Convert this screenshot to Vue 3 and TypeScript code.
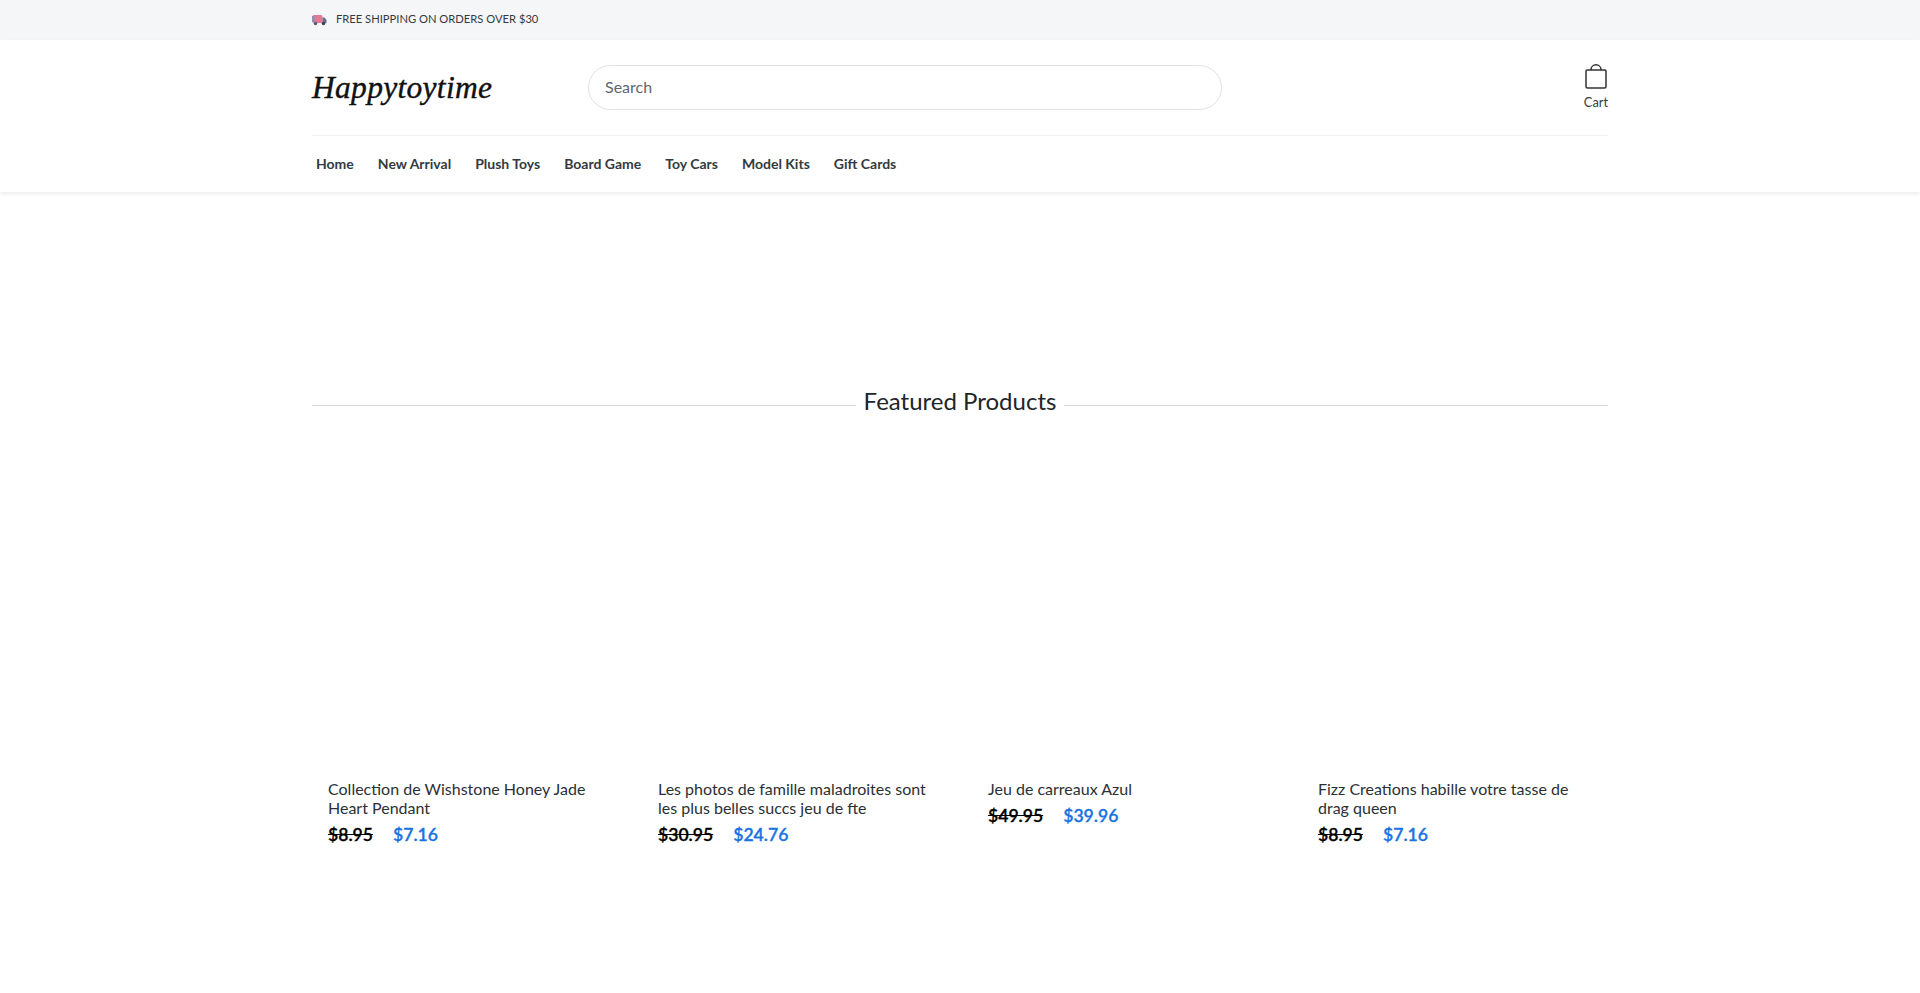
<script setup lang="ts">
interface Product {
  title: string;
  oldPrice: string;
  price: string;
}

const navLinks: string[] = ['Home', 'New Arrival', 'Plush Toys', 'Board Game', 'Toy Cars', 'Model Kits', 'Gift Cards'];

const products: Product[] = [
  { title: 'Collection de Wishstone Honey Jade Heart Pendant', oldPrice: '$8.95', price: '$7.16' },
  { title: 'Les photos de famille maladroites sont les plus belles succs jeu de fte', oldPrice: '$30.95', price: '$24.76' },
  { title: 'Jeu de carreaux Azul', oldPrice: '$49.95', price: '$39.96' },
  { title: 'Fizz Creations habille votre tasse de drag queen', oldPrice: '$8.95', price: '$7.16' },
];
</script>

<template>
  <div class="page">
    <div class="topbar">
      <div class="container topbar-inner">
        <svg class="truck" width="15" height="12" viewBox="0 0 15 12">
          <rect x="0.500" y="1" width="10" height="8" rx="1.500" fill="#e27a94" />
          <path d="M10.500 3.500h2l2 2.500v3h-4z" fill="#6a6f8c" />
          <rect x="0" y="2" width="2.500" height="6" fill="#8d8fb5" />
          <circle cx="3.500" cy="9.500" r="1.800" fill="#5a5f7a" />
          <circle cx="11.500" cy="9.500" r="1.800" fill="#3f4258" />
        </svg>
        <span>FREE SHIPPING ON ORDERS OVER $30</span>
      </div>
    </div>

    <header class="header">
      <div class="container">
        <div class="header-main">
          <a class="logo">Happytoytime</a>
          <div class="search">Search</div>
          <div class="cart">
            <svg width="22" height="25" viewBox="0 0 22 25" fill="none" stroke="#333" stroke-width="1.500">
              <path d="M2 6h18a1 1 0 0 1 1 1v15.500a1.500 1.500 0 0 1-1.500 1.500h-17A1.500 1.500 0 0 1 1 22.500V7a1 1 0 0 1 1-1z" />
              <path d="M6 6V5.500a5 4.700 0 0 1 10 0V6" />
            </svg>
            <span>Cart</span>
          </div>
        </div>
        <nav class="nav">
          <a v-for="link in navLinks" :key="link" class="nav-link">{{ link }}</a>
        </nav>
      </div>
    </header>

    <main class="container">
      <h2 class="section-title"><span>Featured Products</span></h2>
      <div class="product-grid">
        <div v-for="product in products" :key="product.title" class="product">
          <div class="product-title">{{ product.title }}</div>
          <div class="product-prices">
            <s class="old-price">{{ product.oldPrice }}</s>
            <span class="price">{{ product.price }}</span>
          </div>
        </div>
      </div>
    </main>
  </div>
</template>

<style>
html,
body {
  background: #fff;
}
</style>

<style scoped>
.page {
  min-height: 993px;
  font-family: Lato, 'Liberation Sans', sans-serif;
  color: #212529;
}

.container {
  width: 1296px;
  margin: 0 auto;
}

.topbar {
  height: 40px;
  background: #f5f6f8;
}

.topbar-inner {
  display: flex;
  align-items: center;
  gap: 9px;
  height: 37px;
  font-size: 11.200px;
  color: #343a40;
}

.truck {
  margin-top: 2px;
}

.header {
  height: 152px;
  background: #fff;
  box-shadow: 0 2px 4px rgba(0, 0, 0, 0.07);
}

.header-main {
  display: flex;
  align-items: center;
  height: 95px;
  border-bottom: 1px solid #f0f0f0;
}

.logo {
  width: 276px;
  font-family: 'Liberation Serif', serif;
  font-style: italic;
  font-size: 31.500px;
  line-height: 36px;
  letter-spacing: 0.3px;
  color: #111;
  -webkit-text-stroke: 0.4px #111;
}

.search {
  width: 634px;
  height: 45px;
  box-sizing: border-box;
  padding-left: 16px;
  line-height: 41px;
  border: 1px solid #dee2e6;
  border-radius: 23px;
  font-size: 16px;
  color: #5f666d;
}

.cart {
  margin-left: auto;
  margin-bottom: 1px;
  display: flex;
  flex-direction: column;
  align-items: center;
  gap: 5px;
  font-size: 12.800px;
  color: #343a40;
}

.nav {
  display: flex;
  gap: 24px;
  padding: 19px 0 0 4px;
}

.nav-link {
  font-size: 14px;
  font-weight: 700;
  line-height: 18px;
  color: #343a40;
}

.section-title {
  display: flex;
  align-items: center;
  gap: 8px;
  margin: 193px 0 0;
  font-size: 24px;
  font-weight: 400;
  line-height: 32px;
  color: #212529;
}

.section-title::before,
.section-title::after {
  content: '';
  flex: 1;
  height: 1px;
  margin-top: 8px;
  background: #d8dbde;
}

.product-grid {
  display: grid;
  grid-template-columns: repeat(4, 330px);
  margin: 362px 0 0 16px;
}

.product-title {
  width: 274px;
  font-size: 16px;
  line-height: 19px;
  color: #2b3035;
}

.product-prices {
  display: flex;
  gap: 20px;
  margin-top: 7px;
  font-size: 17.600px;
  line-height: 22px;
  font-weight: 600;
  -webkit-text-stroke: 0.3px currentColor;
}

.old-price {
  color: #000;
}

.price {
  color: #1a73e0;
}
</style>
